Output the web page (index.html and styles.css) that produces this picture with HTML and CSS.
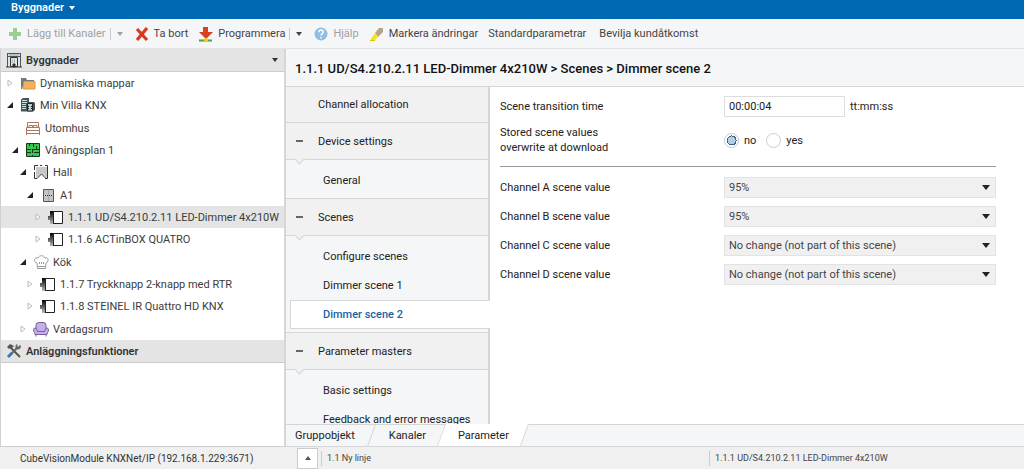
FILE: index.html
```html
<!DOCTYPE html>
<html lang="sv">
<head>
<meta charset="utf-8">
<meta name="viewport" content="width=device-width, initial-scale=1">
<title>Byggnader</title>
<link rel="stylesheet" href="styles.css">
</head>
<body>
<svg class="sprite" aria-hidden="true">
  <defs><linearGradient id="shade" x1="0" y1="0" x2="0" y2="1"><stop offset="0" stop-color="#000"/><stop offset="1" stop-color="#bbb"/></linearGradient></defs>
  <symbol id="device" viewBox="0 0 16 16">
    <path d="M4.500 2.500h10v12h-10z" fill="#fff" stroke="#222"/>
    <path d="M2 2h3v13H2v-4H0V7h2z" fill="url(#shade)"/>
    <path d="M5.500 2v13" stroke="#222"/>
  </symbol>
  <symbol id="open" viewBox="0 0 8 8"><path d="M7 1v6H1z" fill="#222"/></symbol>
  <symbol id="closed" viewBox="0 0 8 8"><path d="M2 1l4 3-4 3z" fill="#fff" stroke="#bbb"/></symbol>
</svg>
<div class="app">
  <header class="titlebar"><button class="menu">Byggnader<span class="caret"></span></button></header>

  <div class="toolbar" role="toolbar">
    <button class="tool add" disabled>
      <svg class="icon" viewBox="0 0 16 16"><path d="M6 2h4v4h4v4h-4v4H6v-4H2V6h4z" fill="#9fce94"/></svg>Lägg till Kanaler</button>
    <button class="drop" disabled aria-label="Fler kanalval"><span class="caret"></span></button>
    <button class="tool">
      <svg class="icon" viewBox="0 0 16 16"><path d="M3 3l10 11M13 2L3 14" stroke="#d93a1c" stroke-width="3.200"/></svg>Ta bort</button>
    <button class="tool program">
      <svg class="icon" viewBox="0 0 16 16"><path d="M5 1h5v5h5l-7 7-7-7h4z" fill="#d8431f"/><path d="M1 14.500h13" stroke="#4da23c" stroke-width="2"/><path d="M5.500 15.500L7 12h2l1.500 3.500z" fill="#f2cd25"/></svg>Programmera</button>
    <button class="drop" aria-label="Programmeringsval"><span class="caret"></span></button>
    <button class="tool help" disabled>
      <svg class="icon" viewBox="0 0 16 16"><circle cx="8" cy="8" r="6.500" fill="#8fbde3"/><path d="M5.800 6.200c.1-3 4.600-2.800 4.400 0C10 7.800 8 7.600 8 9.600M8 11v1.500" fill="none" stroke="#fff" stroke-width="1.500"/></svg>Hjälp</button>
    <button class="tool">
      <svg class="icon" viewBox="0 0 16 16"><path d="M6 7l4-5h4v4l-5 5z" fill="#b3a58a"/><path d="M6 7l3 4-3.500 3.500H1L2.500 12z" fill="#f3e51e"/><path d="M1 14.500h5" stroke="#d9c800"/></svg>Markera ändringar</button>
    <button class="tool plain">Standardparametrar</button>
    <button class="tool plain">Bevilja kundåtkomst</button>
  </div>

  <div class="workspace">
    <aside class="sidebar">
      <button class="section-head">
        <svg class="icon" viewBox="0 0 16 16"><path d="M1 1.500h14M1 4.500h14M1.500 1v14M14.500 1v14" stroke="#49565a"/><path d="M3 3h10" stroke="#8ba5a8"/><path d="M4.500 5.500h7v9h-7z" fill="#dfe5e4" stroke="#333"/><path d="M6 8h4M6 10h4" stroke="#7b898b" stroke-dasharray="1 1"/><path d="M7 12h2v3H7zM0 15h16" stroke="#333" fill="#333"/></svg>
        <span class="grow">Byggnader</span><span class="caret"></span></button>
      <ul class="tree" role="tree">
        <li class="row l1" role="treeitem"><svg class="twist"><use href="#closed"/></svg>
          <svg class="icon" viewBox="0 0 16 16"><path d="M1 3h5l1 2h7v3H4L2 14H1z" fill="#777"/><path d="M4 6.500h11v7.500H3z" fill="#efb35c" stroke="#d99a42"/></svg>Dynamiska mappar</li>
        <li class="row l1" role="treeitem"><svg class="twist"><use href="#open"/></svg>
          <svg class="icon" viewBox="0 0 16 16"><path d="M1 2.500L3 1h6v4h5l1 1v7l-2 1.500H1z" fill="#46545b"/><path d="M2 3.500h5M2 5.500h5M2 7.500h4M2 9.500h4M2 11.500h4" stroke="#c9e0dd"/><path d="M7.500 6.500h5V14h-5z" fill="#b8cdd0" stroke="#222"/><path d="M8 9.500h1m2 0h1m-4 2h1m2 0h1" stroke="#222"/></svg>Min Villa KNX</li>
        <li class="row l2" role="treeitem"><span class="twist"></span>
          <svg class="icon" viewBox="0 0 16 16"><path d="M2.500 7V2.500h11V7M1.500 7.500h13v6h-13zM1.500 10.500h13M4 7V5.500h3.500V7M8.500 7V5.500H12V7M1.500 13v2M14.500 13v2" fill="none" stroke="#ad765c"/></svg>Utomhus</li>
        <li class="row l2" role="treeitem"><svg class="twist"><use href="#open"/></svg>
          <svg class="icon" viewBox="0 0 16 16"><path d="M1.500 1.500h13v13h-13z" fill="#36c552" stroke="#123d19"/><path d="M1 7.500h5m2 0h6M8.500 2v3M4.500 2v2M11.500 4v3M7.500 7v4m0 2v2M2 10.500h4M9 10.500h5" stroke="#103518" fill="none"/></svg>Våningsplan 1</li>
        <li class="row l3" role="treeitem"><svg class="twist"><use href="#open"/></svg>
          <svg class="icon" viewBox="0 0 16 16"><path d="M3 3h11v11l-5-4-6 4z" fill="#c8c8c8"/><path d="M5 1.500H1.500V6M1.500 8v6.500H4L8.500 10l4 4M12 1.500h2.500v13H12M7 1.500h2" fill="none" stroke="#333"/></svg>Hall</li>
        <li class="row l4" role="treeitem"><svg class="twist"><use href="#open"/></svg>
          <svg class="icon" viewBox="0 0 16 16"><path d="M3.500 2.500h10v12h-10z" fill="#c5c5c5" stroke="#555"/><path d="M8.500 3v11" stroke="#aaa"/><path d="M5 8.500h1m1 0h1m1 0h1m1 0h1" stroke="#333"/></svg>A1</li>
        <li class="row l5 current" role="treeitem" aria-selected="true"><svg class="twist"><use href="#closed"/></svg><svg class="icon"><use href="#device"/></svg>1.1.1 UD/S4.210.2.11 LED-Dimmer 4x210W</li>
        <li class="row l5" role="treeitem"><svg class="twist"><use href="#closed"/></svg><svg class="icon"><use href="#device"/></svg>1.1.6 ACTinBOX QUATRO</li>
        <li class="row l3" role="treeitem"><svg class="twist"><use href="#open"/></svg>
          <svg class="icon" viewBox="0 0 16 16"><path d="M4 9C0 8 1 3 5 4c1-3 6-3 7 0 4-1 4 4 1 5l-.5 5.500h-8zM5 12.500h7M6.500 8v2M8.500 8v2M10.500 8v2" fill="none" stroke="#999"/></svg>Kök</li>
        <li class="row l4" role="treeitem"><svg class="twist"><use href="#closed"/></svg><svg class="icon"><use href="#device"/></svg>1.1.7 Tryckknapp 2-knapp med RTR</li>
        <li class="row l4" role="treeitem"><svg class="twist"><use href="#closed"/></svg><svg class="icon"><use href="#device"/></svg>1.1.8 STEINEL IR Quattro HD KNX</li>
        <li class="row l3" role="treeitem"><svg class="twist"><use href="#closed"/></svg>
          <svg class="icon" viewBox="0 0 16 16"><path d="M3 7V4q0-2.500 3-2.500h4q3 0 3 2.500v3q2.500-.5 2.500 2 0 2-1 2.500L14 13.500H2l-.5-2Q.5 11 .5 9q0-2.500 2.500-2z" fill="#c3b0e6" stroke="#7660a0"/><path d="M3 7l1.500 3.500h7L13 7M3 14v1.500M13 14v1.500" fill="none" stroke="#7660a0"/></svg>Vardagsrum</li>
      </ul>
      <button class="section-head functions">
        <svg class="icon" viewBox="0 0 16 16"><path d="M4 4l10 10" stroke="#555" stroke-width="2"/><path d="M1 4l3-3 4 2-3 3-1-1-1 1z" fill="#555"/><path d="M11 5L5 11" stroke="#666" stroke-width="2"/><path d="M6 10l-4 4" stroke="#3b78b9" stroke-width="3"/><path d="M14 2l-2 2-1-2 1-1q-3 0-2.500 4L11 6.500q4 0 4-3.500z" fill="#666"/></svg>
        <span class="grow">Anläggningsfunktioner</span></button>
    </aside>

    <main class="editor">
      <h1 class="path">1.1.1 UD/S4.210.2.11 LED-Dimmer 4x210W &gt; Scenes &gt; Dimmer scene 2</h1>
      <div class="panes">
        <nav class="nav">
          <a href="#" class="head">Channel allocation</a>
          <a href="#" class="head fold">Device settings</a>
          <div class="group"><a href="#" class="item">General</a></div>
          <a href="#" class="head fold">Scenes</a>
          <div class="group">
            <a href="#" class="item">Configure scenes</a>
            <a href="#" class="item">Dimmer scene 1</a>
            <a href="#" class="item active" aria-current="page">Dimmer scene 2</a>
          </div>
          <a href="#" class="head fold">Parameter masters</a>
          <div class="group">
            <a href="#" class="item">Basic settings</a>
            <a href="#" class="item">Feedback and error messages</a>
          </div>
        </nav>
        <form class="form">
          <div class="field">
            <label for="time">Scene transition time</label>
            <div class="control"><input class="text" id="time" type="text" value="00:00:04"><span>tt:mm:ss</span></div>
          </div>
          <div class="field tall" role="radiogroup" aria-labelledby="stored">
            <span id="stored">Stored scene values<br>overwrite at download</span>
            <div class="control choices">
              <label class="choice"><input class="radio" type="radio" name="stored" checked>no</label>
              <label class="choice"><input class="radio" type="radio" name="stored">yes</label>
            </div>
          </div>
          <hr class="rule">
          <div class="field"><label for="cha">Channel A scene value</label><div class="pick"><select id="cha"><option>95%</option></select></div></div>
          <div class="field"><label for="chb">Channel B scene value</label><div class="pick"><select id="chb"><option>95%</option></select></div></div>
          <div class="field"><label for="chc">Channel C scene value</label><div class="pick"><select id="chc"><option>No change (not part of this scene)</option></select></div></div>
          <div class="field"><label for="chd">Channel D scene value</label><div class="pick"><select id="chd"><option>No change (not part of this scene)</option></select></div></div>
        </form>
      </div>
      <div class="tabs" role="tablist">
        <button class="tab first" role="tab">Gruppobjekt</button>
        <button class="tab" role="tab">Kanaler</button>
        <button class="tab selected" role="tab" aria-selected="true">Parameter</button>
      </div>
    </main>
  </div>

  <footer class="status">
    <span class="link">CubeVisionModule KNXNet/IP (192.168.1.229:3671)</span>
    <button class="up" aria-label="Välj anslutning"><span class="caret"></span></button>
    <span class="cell">1.1 Ny linje</span>
    <span class="cell">1.1.1 UD/S4.210.2.11 LED-Dimmer 4x210W</span>
  </footer>
</div>
</body>
</html>
```
FILE: styles.css
```css
* { box-sizing: border-box; }
body { margin: 0; font: 11px/15px Roboto, "Open Sans", sans-serif; color: #222; }
button, input, select { font: inherit; color: inherit; }
button { border: 0; padding: 0; background: none; white-space: nowrap; }
a { color: inherit; text-decoration: none; }
.sprite { position: absolute; width: 0; height: 0; }
.icon { width: 16px; height: 16px; flex: none; }
.grow { flex: 1; text-align: left; }
.caret { flex: none; width: 0; height: 0; border: 3px solid transparent; border-top: 4px solid currentColor; border-bottom: 0; }

.app { display: flex; flex-direction: column; height: 100vh; background: #f5f6f8; }
.titlebar { display: flex; height: 19px; padding: 0 11px 4px; background: #0069b4; flex: none; }
.menu { display: flex; align-items: center; gap: 5px; color: #fff; font-weight: 600; }

.toolbar { display: flex; align-items: center; height: 30px; padding: 0 7px; border-bottom: 1px solid #e2e2e4; flex: none; }
.tool { display: flex; align-items: center; gap: 4px; margin-right: 10px; color: #444; }
.tool.plain { margin-right: 13px; }
.tool.add, .tool.program { margin-right: 4px; }
.tool:disabled, .drop:disabled { color: #a0a0a0; }
.drop { display: flex; align-items: center; height: 12px; padding-left: 6px; margin-right: 11px; border-left: 1px solid #ccc; color: #444; }

.workspace { display: flex; flex: 1; min-height: 0; }
.sidebar { width: 284px; flex: none; background: #fff; border-left: 1px solid #d0d0d2; border-bottom: 1px solid #d0d0d2; }
.section-head { display: flex; align-items: center; gap: 4px; width: 100%; height: 23px; padding: 0 6px 0 5px; background: #e4e4e4; border-bottom: 1px solid #ccc; font-weight: 600; color: #333; }
.tree { list-style: none; margin: 0; padding: 0; }
.row { display: flex; align-items: center; gap: 4px; height: 22px; color: #3c3c3c; white-space: nowrap; }
.row:nth-child(3n) { margin-top: 1px; }
.row.current { background: #e4e4e4; }
.twist { width: 8px; height: 8px; margin-right: 2px; flex: none; }
.l1 { padding-left: 5px; }
.l2 { padding-left: 10px; }
.l3 { padding-left: 18px; }
.l4 { padding-left: 25px; }
.l5 { padding-left: 33px; }

.editor { flex: 1; min-width: 0; display: flex; flex-direction: column; border-left: 2px solid #d5d6d8; }
.path { margin: 0; height: 38px; padding: 10px 9px; font-size: 13px; line-height: 19px; font-weight: 500; color: #111; border-bottom: 1px solid #d5d6d8; white-space: nowrap; flex: none; }
.panes { display: flex; flex: 1; min-height: 0; overflow: hidden; background: #fff; }
.nav { width: 204px; flex: none; background: #f5f6f8; border-right: 2px solid #d5d6d8; }
.head { display: flex; align-items: center; height: 37px; padding-left: 32px; background: #f1f1f1; border-bottom: 1px solid #d5d6d8; position: relative; }
.head:first-child { height: 36px; }
.fold::before { content: ""; position: absolute; left: 10px; top: 17px; width: 7px; height: 2px; background: #666; }
.fold::after { content: ""; position: absolute; left: 10px; bottom: -4px; width: 6px; height: 6px; background: #f1f1f1; border: solid #d5d6d8; border-width: 0 1px 1px 0; transform: rotate(45deg); }
.group { padding: 6px 0 3px; border-bottom: 1px solid #d5d6d8; }
.group:last-child { border-bottom: 0; }
.item { display: flex; align-items: center; height: 29px; padding-left: 37px; white-space: nowrap; }
.item.active { position: relative; margin: 0 -2px 0 4px; padding-left: 32px; background: #fff; border: 1px solid #d5d6d8; border-right: 0; color: #1b5fa8; font-weight: 500; }

.form { flex: 1; min-width: 0; margin: 0; padding: 9px 28px 0 10px; }
.field { display: grid; grid-template-columns: 224px 1fr; align-items: center; min-height: 21px; margin-bottom: 8px; }
.field.tall { min-height: 30px; margin: 8px 0 11px; }
.control { display: flex; align-items: center; gap: 5px; }
.text { width: 121px; height: 21px; padding: 0 4px; border: 1px solid #ddd; background: #fff; }
.choices { gap: 10px; }
.choice { display: flex; align-items: center; gap: 5px; }
.radio { appearance: none; width: 15px; height: 15px; margin: 0; border: 1px solid #ccc; border-radius: 50%; background: #fff; }
.radio:checked { border-color: #b9cde0; background: radial-gradient(circle, #b3cfe8 4px, #4a6078 4px, #4a6078 5px, #fff 5px); }
.rule { margin: 0 0 10px; border: 0; border-top: 1px solid #999; }
.pick { position: relative; display: flex; }
.pick::after { content: ""; position: absolute; right: 6px; top: 8px; border: 4px solid transparent; border-top: 5px solid #222; border-bottom: 0; pointer-events: none; }
.pick select { appearance: none; width: 100%; height: 21px; padding: 0 4px; border: 1px solid #e2e2e2; border-radius: 0; background: #f0f0f0; color: #444; }

.tabs { display: flex; flex: none; height: 23px; border-top: 1px solid #d5d6d8; border-bottom: 1px solid #d5d6d8; background: #f5f6f8; }
.tab { position: relative; padding: 0 16px; z-index: 0; }
.tab.first { padding: 0 18px 0 9px; }
.tab::after { content: ""; position: absolute; inset: 0; border-right: 1px solid #d5d6d8; transform: skewX(-20deg); z-index: -1; }
.tab.first::after { left: 50%; }
.tab.selected::after { top: -1px; background: #fff; }

.status { display: flex; align-items: center; flex: none; height: 22px; background: #f0f0f0; font-size: 9px; }
.link { width: 297px; flex: none; padding-left: 20px; font-size: 10px; color: #333; white-space: nowrap; }
.up { display: grid; place-items: center; width: 21px; height: 21px; margin-right: 3px; border: 1px solid #ccc; background: #fff; color: #555; }
.up .caret { transform: rotate(180deg); }
.cell { flex: 1 1 388px; padding-left: 5px; border-left: 1px solid #ccc; color: #444; white-space: nowrap; }
.cell:last-child { flex-basis: 315px; }
```
